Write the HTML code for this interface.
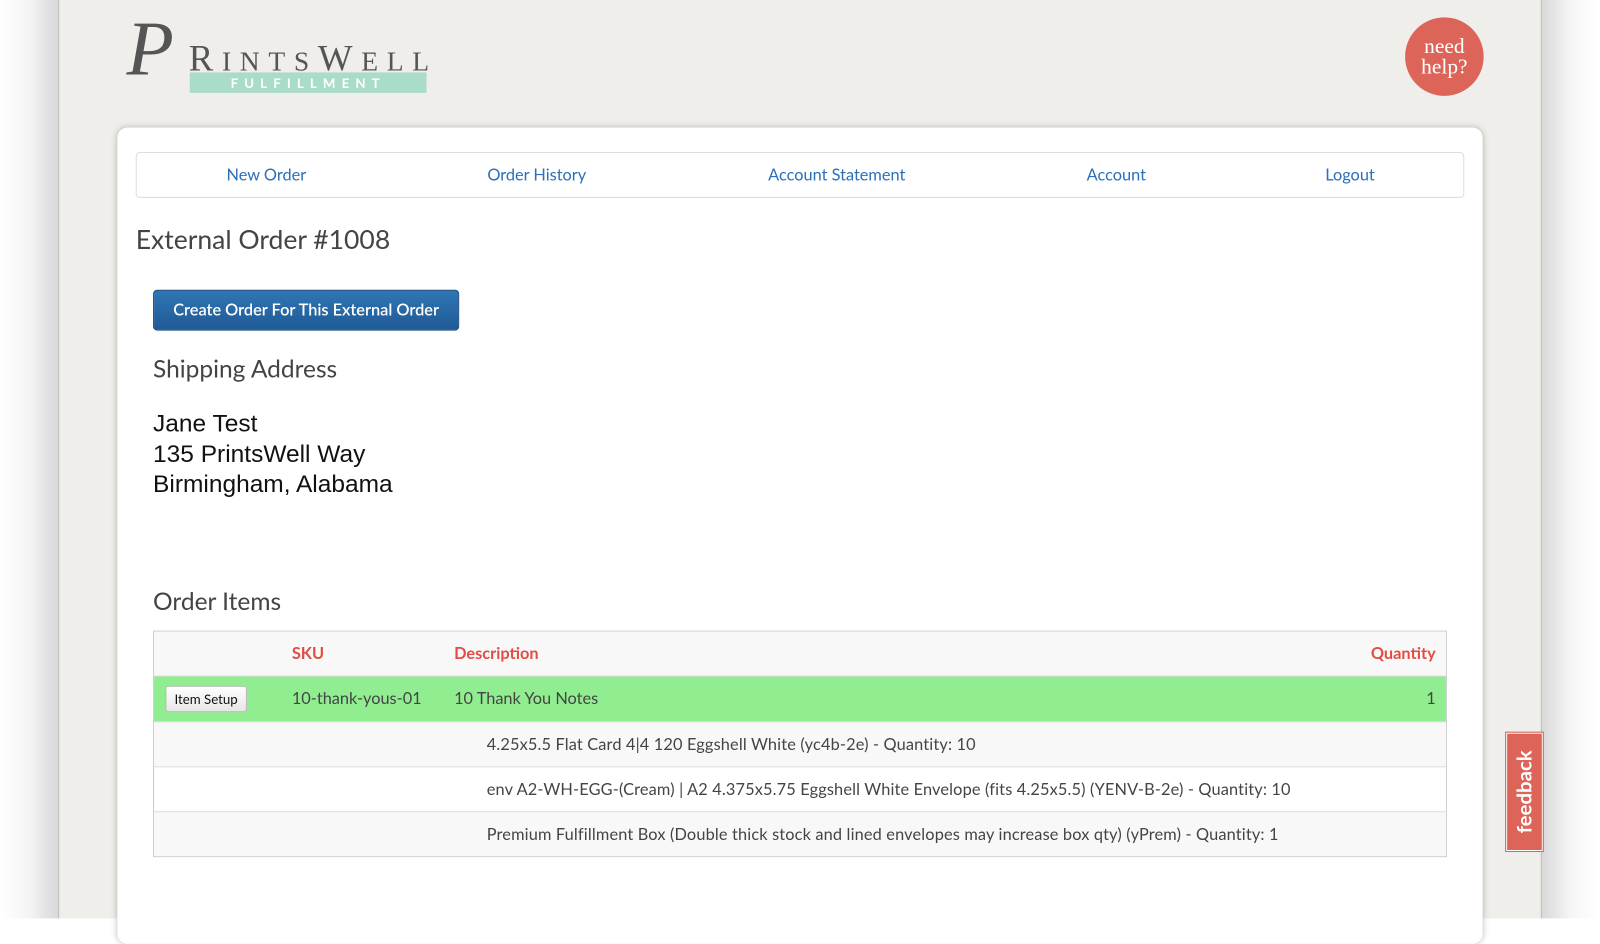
<!DOCTYPE html>
<html><head><meta charset="utf-8"><style>
*{box-sizing:border-box;margin:0;padding:0}
body{width:1600px;height:900px;overflow:hidden;background:#fff;font-family:"Lato","Liberation Sans",sans-serif;position:relative}
#w{position:absolute;left:0;top:0;width:1568px;height:882px;transform:scale(1.0204);transform-origin:0 0}
.shadowL{position:absolute;left:0;top:0;width:57px;height:900px;background:linear-gradient(to right,#fff 0%,#f4f4f4 50%,#d8d8d8 100%)}
.shadowR{position:absolute;left:1511px;top:0;width:57px;height:900px;background:linear-gradient(to left,#fff 0%,#f6f6f6 50%,#d8d8d8 100%)}
.page{position:absolute;left:57px;top:0;width:1454px;height:900px;background:#efeeea;border-left:1px solid #bbb;border-right:1px solid #bbb}
.logo{position:absolute;left:122px;top:12px}
.bigP{position:absolute;left:2px;top:-2px;font-family:"Liberation Serif",serif;font-style:italic;font-size:76px;color:#555;line-height:1}
.rints{position:absolute;left:63px;top:27px;font-family:"Liberation Serif",serif;font-size:36px;letter-spacing:8.5px;color:#555;white-space:nowrap;line-height:1}
.rints small{font-size:27px}
.ful{position:absolute;left:64px;top:59px;width:232px;height:20px;background:#a9dcc9;color:#fff;font-size:13px;font-weight:bold;letter-spacing:6px;text-align:center;line-height:20px}
.help{position:absolute;left:1377px;top:17px;width:77px;height:77px;border-radius:50%;background:#dc6459;color:#fff;font-family:"Liberation Serif",serif;font-size:21px;line-height:20px;text-align:center;padding-top:18px}
.card{position:absolute;left:115px;top:125px;width:1338px;height:800px;background:#fff;border-radius:10px;box-shadow:0 0 6px rgba(0,0,0,.25)}
.nav{position:absolute;left:18px;top:24px;width:1302px;height:45px;border:1px solid #ddd;border-radius:4px}
.nav a{position:absolute;top:12px;color:#2a6fb8;font-size:16px;text-decoration:none;transform:translateX(-50%);white-space:nowrap}
h1{position:absolute;left:18px;top:93px;font-size:26px;font-weight:normal;color:#444}
.btn{position:absolute;left:35px;top:159px;width:300px;height:40px;background:linear-gradient(#2f76b5,#1f5a95);border:1px solid #1a4c80;border-radius:4px;color:#fff;font-size:16px;font-weight:600;text-align:center;line-height:38px}
h2{position:absolute;left:35px;font-size:24px;font-weight:normal;color:#444}
.addr{position:absolute;left:35px;top:276px;font-family:"Liberation Sans",sans-serif;font-size:24px;line-height:29.5px;color:#111}
.tbl{position:absolute;left:35px;top:493px;width:1268px;border:1px solid #ccc}
.row{position:relative;height:44px;border-top:1px solid #ddd;font-size:16px;color:#444}
.row span{position:absolute;top:12px;white-space:nowrap}
.d{letter-spacing:0.15px}
.hd{background:#f8f8f8;border-top:none;height:43px;color:#e14d43;font-weight:bold}
.g{background:#90ee90;height:45px}
.alt{background:#f8f8f8}
.is{position:absolute;left:11px;top:9px;width:80px;height:26px;background:linear-gradient(#fff,#e6e6e6);border:1px solid #bbb;border-radius:3px;font-size:13px;color:#111;text-align:center;line-height:24px}
.fb{position:absolute;left:1476px;top:718px;width:36px;height:116px;background:#dc6459;border:1px solid #fff;outline:1px solid #dc6459}
.fb span{position:absolute;left:50%;top:50%;transform:translate(-50%,-50%) rotate(-90deg);color:#fff;font-size:20px;font-weight:bold;white-space:nowrap}
</style></head><body><div id="w">
<div class="shadowL"></div><div class="shadowR"></div>
<div class="page"></div>
<div class="logo"><div class="bigP">P</div><div class="rints">R<small>INTS</small>W<small>ELL</small></div><div class="ful">FULFILLMENT</div></div>
<div class="help">need<br>help?</div>
<div class="card">
<div class="nav"><a style="left:127px">New Order</a><a style="left:392px">Order History</a><a style="left:686px">Account Statement</a><a style="left:960px">Account</a><a style="left:1189px">Logout</a></div>
<h1>External Order #1008</h1>
<div class="btn">Create Order For This External Order</div>
<h2 style="top:222px">Shipping Address</h2>
<div class="addr">Jane Test<br>135 PrintsWell Way<br>Birmingham, Alabama</div>
<h2 style="top:450px">Order Items</h2>
<div class="tbl">
<div class="row hd"><span style="left:135px">SKU</span><span style="left:294px">Description</span><span style="right:10px">Quantity</span></div>
<div class="row g"><div class="is">Item Setup</div><span style="left:135px">10-thank-yous-01</span><span style="left:294px">10 Thank You Notes</span><span style="right:10px">1</span></div>
<div class="row alt"><span class="d" style="left:326px">4.25x5.5 Flat Card 4|4 120 Eggshell White (yc4b-2e) - Quantity: 10</span></div>
<div class="row"><span class="d" style="left:326px">env A2-WH-EGG-(Cream) | A2 4.375x5.75 Eggshell White Envelope (fits 4.25x5.5) (YENV-B-2e) - Quantity: 10</span></div>
<div class="row alt"><span class="d" style="left:326px">Premium Fulfillment Box (Double thick stock and lined envelopes may increase box qty) (yPrem) - Quantity: 1</span></div>
</div>
</div>
<div class="fb"><span>feedback</span></div>
</div></body></html>
